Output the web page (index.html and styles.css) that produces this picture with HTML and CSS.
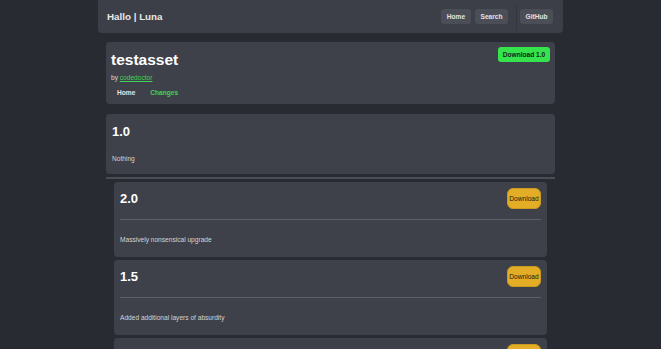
FILE: index.html
```html
<!DOCTYPE html>
<html>
<head>
<meta charset="utf-8">
<link rel="stylesheet" href="styles.css">
</head>
<body>
<div class="page">
  <header class="topbar">
    <div class="brand">Hallo | Luna</div>
    <nav class="topnav">
      <a class="tbtn">Home</a>
      <a class="tbtn">Search</a>
      <span class="divider"></span>
      <a class="tbtn">GitHub</a>
    </nav>
  </header>

  <section class="card asset">
    <div class="asset-top">
      <h1 class="asset-title">testasset</h1>
      <a class="dl-main">Download 1.0</a>
    </div>
    <div class="byline">by <a class="author">codedoctor</a></div>
    <div class="tabs">
      <a class="tab">Home</a>
      <a class="tab active">Changes</a>
    </div>
  </section>

  <section class="card current">
    <h2 class="ver">1.0</h2>
    <p class="desc">Nothing</p>
  </section>

  <div class="sep"></div>

  <div class="versions">
    <section class="card vcard">
      <div class="vhead">
        <h2 class="ver">2.0</h2>
        <a class="dl">Download</a>
      </div>
      <hr class="vrule">
      <p class="desc">Massively nonsensical upgrade</p>
    </section>
    <section class="card vcard">
      <div class="vhead">
        <h2 class="ver">1.5</h2>
        <a class="dl">Download</a>
      </div>
      <hr class="vrule">
      <p class="desc">Added additional layers of absurdity</p>
    </section>
    <section class="card vcard">
      <div class="vhead">
        <h2 class="ver">1.0</h2>
        <a class="dl">Download</a>
      </div>
      <hr class="vrule">
      <p class="desc">Nothing</p>
    </section>
  </div>
</div>
</body>
</html>
```

FILE: styles.css
```css
* { box-sizing: border-box; }
html, body { margin: 0; padding: 0; }
body {
  background: #282b32;
  font-family: "Liberation Sans", Arial, sans-serif;
  color: #e6e6e6;
  overflow: hidden;
  height: 349px;
}
.page {
  width: 465px;
  margin: 0 auto;
}
.topbar {
  height: 33px;
  background: #3c3f47;
  border-radius: 0 0 4px 4px;
  display: flex;
  align-items: center;
  justify-content: space-between;
  padding: 0 10px 0 9px;
}
.brand {
  font-size: 9.8px;
  font-weight: bold;
  color: #e8e8e8;
}
.topnav {
  display: flex;
  align-items: center;
}
.tbtn {
  height: 15px;
  width: 30px;
  display: flex;
  align-items: center;
  justify-content: center;
  background: #4b4e57;
  border-radius: 3px;
  font-size: 6.6px;
  font-weight: bold;
  color: #e2e2e2;
  margin-left: 4px;
}
.tbtn:nth-child(2) { width: 33px; }
.tbtn:nth-child(4) { width: 33px; margin-left: 3px; }
.divider {
  width: 1px;
  height: 27px;
  background: #35373e;
  margin-left: 8px;
}
.card {
  background: #3e414a;
  border-radius: 4px;
}
.asset {
  margin: 9px 8px 0;
  height: 62px;
  padding: 5px 5px 0 5px;
}
.asset-top {
  display: flex;
  justify-content: space-between;
  align-items: flex-start;
}
.asset-title {
  margin: 0;
  font-size: 15.5px;
  line-height: 25px;
  font-weight: bold;
  color: #ffffff;
}
.dl-main {
  height: 15px;
  width: 52px;
  display: flex;
  align-items: center;
  justify-content: center;
  background: #35e34c;
  border-radius: 3px;
  font-size: 6.6px;
  font-weight: bold;
  color: #14261a;
}
.byline {
  font-size: 6.6px;
  line-height: 10px;
  margin-top: 1px;
  color: #d8d8d8;
}
.author {
  color: #3fd256;
  text-decoration: underline;
}
.tabs {
  display: flex;
  margin-top: 3px;
  padding-left: 6px;
}
.tab {
  font-size: 6.6px;
  font-weight: bold;
  line-height: 14px;
  color: #e6e6e6;
  margin-right: 15px;
}
.tab.active { color: #3fd256; }
.current {
  margin: 10px 8px 0;
  height: 60px;
  padding: 7px 6px 0;
}
.ver {
  margin: 0;
  font-size: 13px;
  line-height: 21px;
  font-weight: bold;
  color: #ffffff;
}
.current .desc { margin-top: 12px; }
.desc {
  margin: 0;
  font-size: 6.6px;
  line-height: 10px;
  color: #d4d4d4;
}
.sep {
  height: 2px;
  background: #4a4d55;
  margin: 3px 8px 0;
}
.versions {
  display: flex;
  flex-direction: column;
  gap: 3px;
  margin: 3px 16px 0;
}
.vcard {
  height: 75px;
  padding: 6px 6px 0;
}
.vhead {
  display: flex;
  justify-content: space-between;
  align-items: center;
  height: 21px;
}
.dl {
  height: 21px;
  width: 34px;
  display: flex;
  align-items: center;
  justify-content: center;
  background: #e3ae25;
  border: 1px solid #c99a1f;
  border-radius: 6px;
  font-size: 6.6px;
  color: #1e1a10;
}
.vrule {
  border: 0;
  height: 1px;
  background: #5d6067;
  margin: 10px 0 0;
}
.vcard .desc { margin-top: 15px; }
```
